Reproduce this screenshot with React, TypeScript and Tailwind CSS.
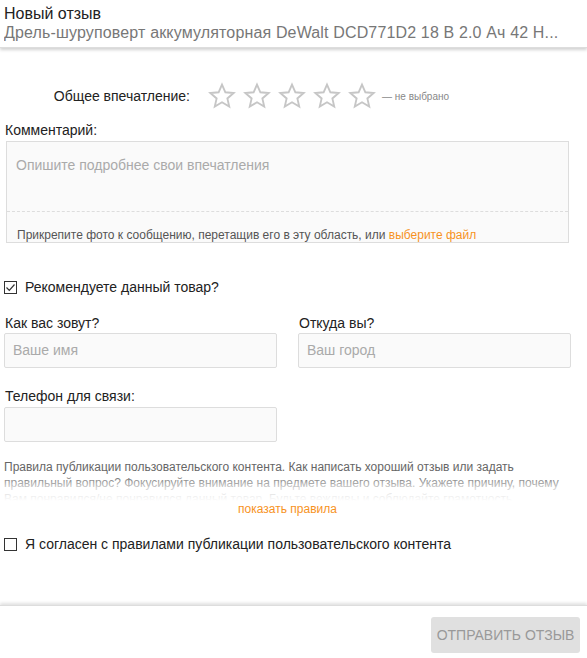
import React, { useState } from "react";

const Star = () => (
  <svg width="28" height="28" viewBox="0 0 24 24" className="shrink-0">
    <path
      d="M12 2.2l2.9 6.6 7.1.6-5.4 4.7 1.6 7-6.2-3.7-6.2 3.7 1.6-7L2 9.4l7.1-.6z"
      fill="none"
      stroke="#c6c6c6"
      strokeWidth="1.6"
      strokeLinejoin="miter"
    />
  </svg>
);

const CheckBox = ({ checked, onClick }: { checked: boolean; onClick: () => void }) => (
  <span
    onClick={onClick}
    className="flex h-[13px] w-[13px] shrink-0 items-center justify-center border border-[#333] bg-white"
  >
    {checked && (
      <svg width="11" height="11" viewBox="0 0 11 11">
        <path d="M1.5 5.5l2.8 2.8L9.5 2.5" fill="none" stroke="#333" strokeWidth="1.2" />
      </svg>
    )}
  </span>
);

const App = () => {
  const [recommend, setRecommend] = useState(true);
  const [agree, setAgree] = useState(false);

  return (
    <div className="flex h-[658px] w-[587px] flex-col bg-white font-['Liberation_Sans',Arial,sans-serif] text-[#222]">
      <div className="h-[48px] px-[4px] pt-[4px] leading-[19px] shadow-[0_2px_3px_rgba(0,0,0,0.18)] border-b border-[#ddd]">
        <div className="text-[16px] text-[#222]">Новый отзыв</div>
        <div className="truncate text-[16px] tracking-[0.15px] text-[#777]">
          Дрель-шуруповерт аккумуляторная DeWalt DCD771D2 18 В 2.0 Ач 42 Н...
        </div>
      </div>

      <div className="flex-1 px-[4px]">
        <div className="mt-[34px] flex items-center">
          <span className="w-[186px] text-right text-[14px]">Общее впечатление:</span>
          <div className="ml-[18px] flex gap-[7px]">
            <Star />
            <Star />
            <Star />
            <Star />
            <Star />
          </div>
          <span className="ml-[6px] text-[10px] text-[#888]">— не выбрано</span>
        </div>

        <div className="mt-[12px] px-[1px] text-[14px] leading-[16px]">Комментарий:</div>
        <div className="ml-[2px] mt-[3px] w-[563px] border border-[#ddd] bg-[#fafafa]">
          <div className="h-[69px] px-[9px] pt-[13px] text-[14px] leading-[20px] text-[#aaa]">
            Опишите подробнее свои впечатления
          </div>
          <div className="h-[31px] border-t border-dashed border-[#ddd] px-[10px] pt-[16px] text-[12px] leading-[14px] text-[#555]">
            Прикрепите фото к сообщению, перетащив его в эту область, или{" "}
            <span className="text-[#f7931e]">выберите файл</span>
          </div>
        </div>

        <label className="mt-[34px] flex h-[20px] items-center gap-[8px] text-[14px]">
          <CheckBox checked={recommend} onClick={() => setRecommend(!recommend)} />
          Рекомендуете данный товар?
        </label>

        <div className="mt-[18px] grid grid-cols-[273px_273px] gap-x-[21px]">
          <div>
            <div className="px-[1px] text-[14px] leading-[16px]">Как вас зовут?</div>
            <div className="mt-[2px] flex h-[35px] items-center rounded-[2px] border border-[#ddd] bg-[#fafafa] px-[8px] text-[14px] text-[#aaa]">
              Ваше имя
            </div>
          </div>
          <div>
            <div className="px-[1px] text-[14px] leading-[16px]">Откуда вы?</div>
            <div className="mt-[2px] flex h-[35px] items-center rounded-[2px] border border-[#ddd] bg-[#fafafa] px-[8px] text-[14px] text-[#aaa]">
              Ваш город
            </div>
          </div>
        </div>

        <div className="mt-[20px] px-[1px] text-[14px] leading-[16px]">Телефон для связи:</div>
        <div className="mt-[3px] h-[35px] w-[273px] rounded-[2px] border border-[#ddd] bg-[#fafafa]" />

        <div className="relative mt-[17px] h-[42px] overflow-hidden text-[12px] leading-[16px] text-[#666]">
          Правила публикации пользовательского контента. Как написать хороший отзыв или задать
          правильный вопрос? Фокусируйте внимание на предмете вашего отзыва. Укажете причину, почему
          Вам понравился/не понравился данный товар. Будьте вежливы и соблюдайте грамотность.
          <div className="absolute inset-x-0 bottom-0 h-[26px] bg-gradient-to-b from-white/0 via-white/70 to-white" />
        </div>
        <div className="pr-[12px] text-center text-[12px] leading-[16px] text-[#f7931e]">показать правила</div>

        <label className="mt-[17px] flex h-[20px] items-center gap-[8px] text-[14px]">
          <CheckBox checked={agree} onClick={() => setAgree(!agree)} />
          Я согласен с правилами публикации пользовательского контента
        </label>
      </div>

      <div className="flex h-[53px] justify-end border-t border-[#ddd] pr-[7px] pt-[11px] shadow-[0_-2px_3px_rgba(0,0,0,0.12)]">
        <button className="h-[36px] w-[149px] rounded-[3px] bg-[#e0e0e0] text-[14px] uppercase text-[#999]">
          Отправить отзыв
        </button>
      </div>
    </div>
  );
};

export default App;
